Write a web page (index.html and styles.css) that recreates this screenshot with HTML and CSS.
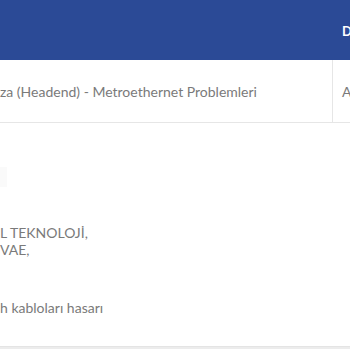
FILE: index.html
```html
<!DOCTYPE html>
<html lang="tr">
<head>
<meta charset="utf-8">
<link rel="stylesheet" href="styles.css">
</head>
<body>
<div class="table">
  <div class="row head">
    <div class="cell main"></div>
    <div class="cell side"><span class="th">D</span></div>
  </div>
  <div class="row body-row">
    <div class="cell main">za (Headend) - Metroethernet Problemleri</div>
    <div class="cell side">A</div>
  </div>
</div>
<div class="details">
  <div class="badge"></div>
  <div class="parties">
    <div>L TEKNOLOJİ,</div>
    <div>VAE,</div>
  </div>
  <div class="desc">h kabloları hasarı</div>
</div>
<div class="footer-line"></div>
</body>
</html>
```

FILE: styles.css
```css
html, body {
  margin: 0;
  padding: 0;
  width: 350px;
  height: 350px;
  overflow: hidden;
  background: #ffffff;
  font-family: "Lato", "Open Sans", sans-serif;
}
.table {
  width: 360px;
}
.row {
  display: flex;
}
.head {
  height: 60px;
  background: #2b4a96;
}
.cell.main {
  width: 332px;
  flex: none;
}
.cell.side {
  flex: 1;
  padding-left: 10px;
}
.head .cell.side {
  display: flex;
  align-items: center;
  padding-top: 2px;
}
.th {
  color: #ffffff;
  font-weight: 700;
  font-size: 13px;
}
.body-row {
  height: 62px;
  border-bottom: 1px solid #e6e6e6;
  align-items: center;
  color: #7a7a7a;
  font-size: 14px;
}
.body-row .cell {
  height: 100%;
  display: flex;
  align-items: center;
}
.body-row .cell.side {
  border-left: 1px solid #e6e6e6;
  padding-left: 9px;
}
.details {
  height: 223px;
  display: flex;
  flex-direction: column;
  color: #7a7a7a;
  font-size: 14px;
}
.badge {
  width: 7px;
  height: 20px;
  margin-top: 44px;
  background: #fafafa;
}
.parties {
  margin-top: 37px;
  line-height: 17px;
}
.desc {
  margin-top: 41px;
  line-height: 17px;
}
.footer-line {
  height: 2px;
  background: #ececec;
  border-top: 1px solid #e4e4e4;
}
```
